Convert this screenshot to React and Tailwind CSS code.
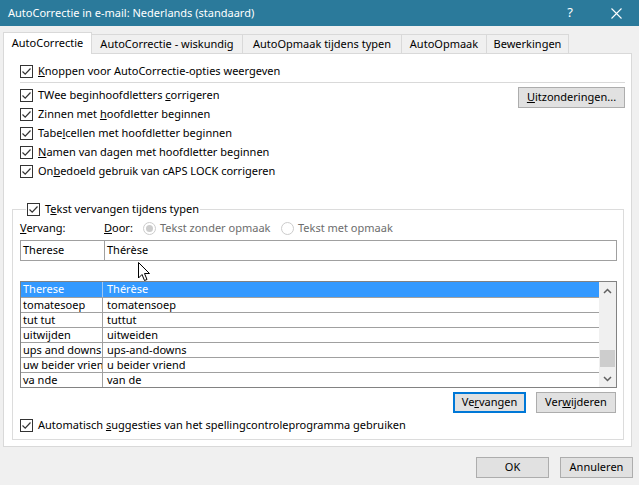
import React from 'react';

const Check = () => (
  <span className="w-[13px] h-[13px] border border-[#333333] bg-white flex items-center justify-center shrink-0">
    <svg width="11" height="11" viewBox="0 0 11 11">
      <path d="M1.5 5.5 L4.2 8.2 L9.5 2.5" fill="none" stroke="#333333" strokeWidth="1.2" />
    </svg>
  </span>
);

const CheckRow = ({ children, className = '' }) => (
  <div className={`flex items-center gap-[5px] h-[19px] whitespace-nowrap ${className}`}>
    <Check />
    <span>{children}</span>
  </div>
);

const Radio = ({ checked }) => (
  <span className="w-[13px] h-[13px] rounded-full border border-[#cccccc] bg-white flex items-center justify-center shrink-0">
    {checked && <span className="w-[7px] h-[7px] rounded-full bg-[#cccccc]" />}
  </span>
);

const Btn = ({ children, className = '', focus }) => (
  <button
    className={`h-[21px] bg-[#e1e1e1] flex items-center justify-center ${
      focus ? 'border-2 border-[#0078d7]' : 'border border-[#adadad]'
    } ${className}`}
  >
    {children}
  </button>
);

const tabs = [
  { label: 'AutoCorrectie', w: 'w-[89px]' },
  { label: 'AutoCorrectie - wiskundig', w: 'w-[151px]' },
  { label: 'AutoOpmaak tijdens typen', w: 'w-[159px]' },
  { label: 'AutoOpmaak', w: 'w-[85px]' },
  { label: 'Bewerkingen', w: 'w-[82px]' },
];

const rows = [
  ['Therese', 'Thérèse'],
  ['tomatesoep', 'tomatensoep'],
  ['tut tut', 'tuttut'],
  ['uitwijden', 'uitweiden'],
  ['ups and downs', 'ups-and-downs'],
  ['uw beider vriend', 'u beider vriend'],
  ['va nde', 'van de'],
];

export default function App() {
  return (
    <div
      className="w-[639px] h-[485px] bg-[#f0f0f0] text-[11px] text-black overflow-hidden relative"
      style={{ fontFamily: '"Noto Sans", "Open Sans", sans-serif' }}
    >
      {/* Title bar */}
      <div className="h-[26px] bg-[#2b7a9b] text-white flex items-center pl-[8px]">
        <span className="flex-1 text-[11px]">AutoCorrectie in e-mail: Nederlands (standaard)</span>
        <span className="w-[46px] text-center text-[13px]">?</span>
        <span className="w-[46px] flex justify-center">
          <svg width="11" height="11" viewBox="0 0 11 11">
            <path d="M0.5 0.5 L10.5 10.5 M10.5 0.5 L0.5 10.5" stroke="white" strokeWidth="1.1" />
          </svg>
        </span>
      </div>

      <div className="pl-[3px] pt-[6px]">
        {/* Tabs */}
        <div className="flex items-end h-[21px] relative z-10">
          {tabs.map((t, i) =>
            i === 0 ? (
              <div
                key={t.label}
                className={`${t.w} h-[22px] -mb-px bg-white border border-b-0 border-[#d9d9d9] flex items-center justify-center`}
              >
                {t.label}
              </div>
            ) : (
              <div
                key={t.label}
                className={`${t.w} h-[19px] bg-[#f0f0f0] border border-l-0 border-b-0 border-[#d9d9d9] flex items-center justify-center whitespace-nowrap`}
              >
                {t.label}
              </div>
            )
          )}
        </div>

        {/* Panel */}
        <div className="w-[629px] h-[394px] bg-white border border-[#d9d9d9] flex flex-col">
          <div className="pl-[16px] pr-[6px] pt-[8px]">
            <CheckRow>
              <u>K</u>noppen voor AutoCorrectie-opties weergeven
            </CheckRow>
            <div className="mt-[1px] h-px bg-[#d9d9d9]" />
            <div className="mt-[3px] flex justify-between">
              <div>
                <CheckRow>
                  TWee beginhoofdletters <u>c</u>orrigeren
                </CheckRow>
                <CheckRow>
                  Zinnen met <u>h</u>oofdletter beginnen
                </CheckRow>
                <CheckRow>
                  Tabe<u>l</u>cellen met hoofdletter beginnen
                </CheckRow>
                <CheckRow>
                  <u>N</u>amen van dagen met hoofdletter beginnen
                </CheckRow>
                <CheckRow>
                  On<u>b</u>edoeld gebruik van cAPS LOCK corrigeren
                </CheckRow>
              </div>
              <Btn className="w-[107px] mt-[1px]">
                <span>
                  <u>U</u>itzonderingen...
                </span>
              </Btn>
            </div>
          </div>

          {/* Group box */}
          <fieldset className="ml-[8px] mr-[7px] mt-[19px] border border-[#dcdcdc] pl-[7px] pr-[6px] pb-[4px] relative">
            <legend className="ml-[6px] px-[1px]">
              <CheckRow>
                T<u>e</u>kst vervangen tijdens typen
              </CheckRow>
            </legend>

            <div className="h-[19px] flex items-center">
              <span className="w-[84px]">
                <u>V</u>ervang:
              </span>
              <span className="w-[39px]">
                <u>D</u>oor:
              </span>
              <Radio checked />
              <span className="ml-[4px] w-[121px] text-[#6d6d6d] whitespace-nowrap">Tekst zonder opmaak</span>
              <Radio />
              <span className="ml-[4px] text-[#6d6d6d] whitespace-nowrap">Tekst met opmaak</span>
            </div>

            <div className="mt-[2px] flex h-[21px]">
              <div className="w-[85px] border border-[#a0a0a0] pl-[2px] flex items-center">Therese</div>
              <div className="flex-1 border border-l-0 border-[#a0a0a0] pl-[2px] flex items-center">Thérèse</div>
            </div>

            <div className="mt-[20px] h-[107px] border border-[#828282] flex">
              <div className="flex-1 min-w-0">
                {rows.map(([a, b], i) => (
                  <div
                    key={a}
                    className={`h-[15px] flex leading-[14px] overflow-hidden ${
                      i === 0 ? 'bg-[#3399ff] text-white' : 'border-t border-[#a0a0a0]'
                    }`}
                  >
                    <div
                      className={`w-[82px] pl-[2px] overflow-hidden whitespace-nowrap border-r ${
                        i === 0 ? 'border-[#a0c8f0]' : 'border-[#a0a0a0]'
                      }`}
                    >
                      {a}
                    </div>
                    <div className="flex-1 pl-[4px] whitespace-nowrap">{b}</div>
                  </div>
                ))}
              </div>
              {/* Scrollbar */}
              <div className="w-[17px] bg-[#f0f0f0] flex flex-col items-center">
                <div className="h-[17px] flex items-center justify-center">
                  <svg width="9" height="6" viewBox="0 0 9 6">
                    <path d="M1 5 L4.5 1.5 L8 5" fill="none" stroke="#606060" strokeWidth="1.5" />
                  </svg>
                </div>
                <div className="flex-1 w-full flex flex-col justify-end pb-[1px]">
                  <div className="h-[17px] mx-[1px] bg-[#cdcdcd] mb-[2px]" />
                </div>
                <div className="h-[17px] flex items-center justify-center">
                  <svg width="9" height="6" viewBox="0 0 9 6">
                    <path d="M1 1 L4.5 4.5 L8 1" fill="none" stroke="#606060" strokeWidth="1.5" />
                  </svg>
                </div>
              </div>
            </div>

            <div className="mt-[4px] flex justify-end gap-[10px] pr-[1px]">
              <Btn focus className="w-[73px]">
                <span>
                  Ve<u>r</u>vangen
                </span>
              </Btn>
              <Btn className="w-[80px]">
                <span>
                  Ver<u>w</u>ijderen
                </span>
              </Btn>
            </div>

            <CheckRow className="mt-[3px]">
              Automatisch <u>s</u>uggesties van het spellingcontroleprogramma gebruiken
            </CheckRow>
          </fieldset>
        </div>

        {/* Bottom buttons */}
        <div className="flex justify-end gap-[11px] pr-[6px] mt-[10px]">
          <Btn className="w-[73px]">OK</Btn>
          <Btn className="w-[73px]">Annuleren</Btn>
        </div>
      </div>

      {/* Mouse pointer */}
      <svg className="absolute left-[138px] top-[262px]" width="13" height="20" viewBox="0 0 13 20">
        <path d="M0.5 0.5 L0.5 16 L4 12.5 L6.5 18.5 L9 17.5 L6.5 11.5 L11.5 11.5 Z" fill="white" stroke="black" strokeWidth="1" />
      </svg>
    </div>
  );
}
